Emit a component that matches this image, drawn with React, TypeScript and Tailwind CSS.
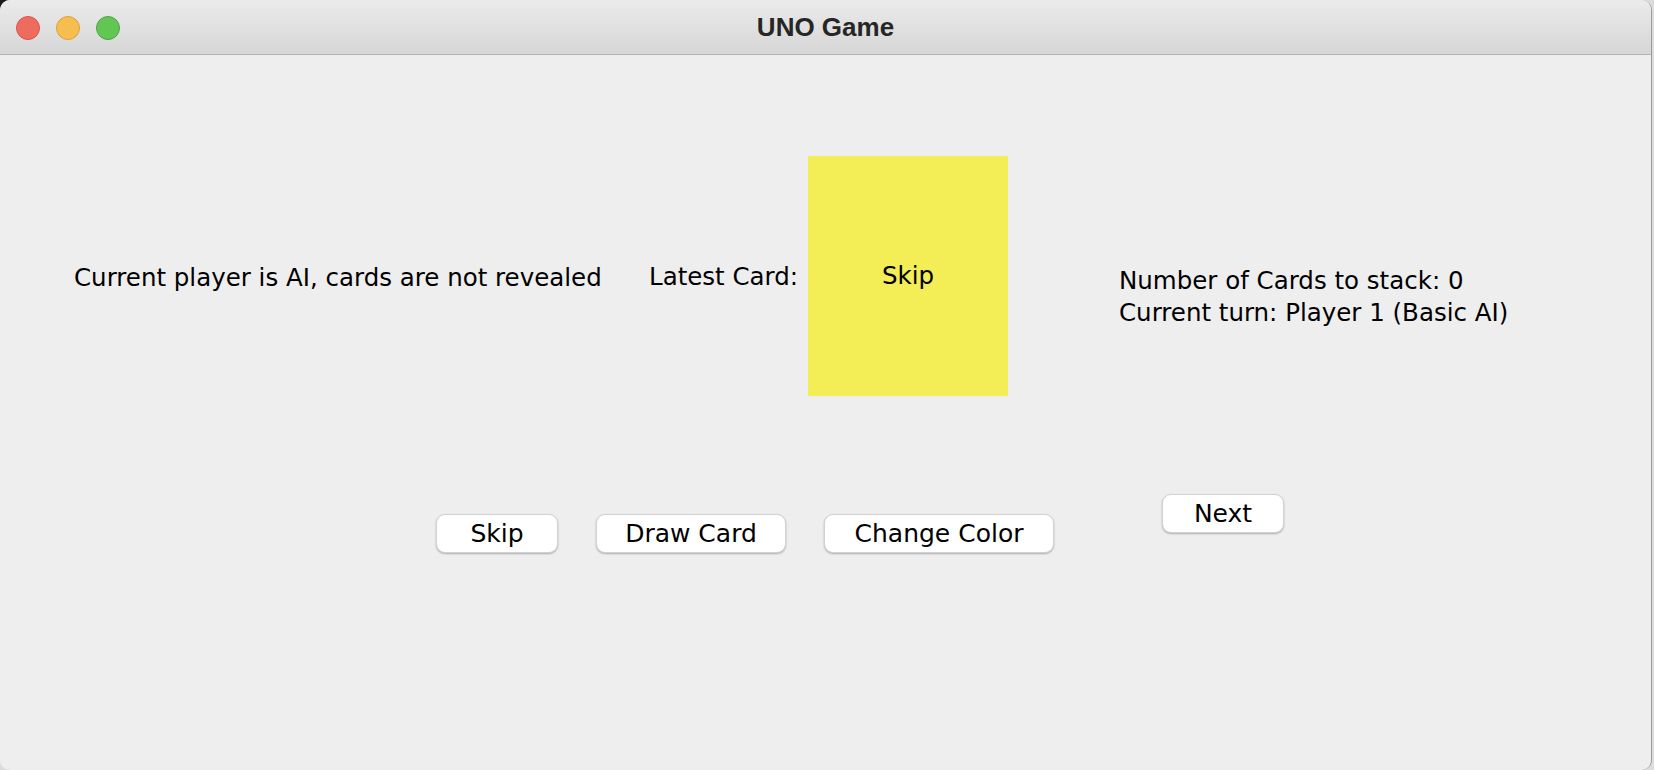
import React from "react";

const body = { fontFamily: '"DejaVu Sans", "Noto Sans", sans-serif' };

function Btn({ label, w, extra = "" }: { label: string; w: string; extra?: string }) {
  return (
    <button
      className={`${w} ${extra} h-[39px] rounded-[9px] bg-white border border-[#d2d2d2] shadow-[0_1px_2px_rgba(0,0,0,0.28)] flex items-center justify-center text-[25px] leading-[30px] text-black`}
      style={body}
    >
      {label}
    </button>
  );
}

export default function App() {
  return (
    <div className="relative w-[1654px] h-[770px] bg-[#dcdcdc] overflow-hidden">
      <div className="absolute left-0 top-0 w-[12px] h-[12px] bg-[#1a1a1a]" />
      <div className="relative w-[1652px] h-[770px] rounded-[10px] bg-[#eeeeee] border-r border-[#9c9c9c] overflow-hidden flex flex-col">
        {/* title bar */}
        <div className="h-[55px] shrink-0 border-b border-[#b3b3b3] bg-gradient-to-b from-[#ebebeb] to-[#d6d6d6] relative flex items-center justify-center">
          <div className="absolute left-[16px] top-[16px] flex gap-[16px]">
            <div className="w-[24px] h-[24px] rounded-full bg-[#ee6b60] border border-[#d5574d]" />
            <div className="w-[24px] h-[24px] rounded-full bg-[#f6be4f] border border-[#d9a23f]" />
            <div className="w-[24px] h-[24px] rounded-full bg-[#62c554] border border-[#4ea443]" />
          </div>
          <span
            className="text-[26px] font-bold text-[#262626] leading-none"
            style={{ fontFamily: '"Liberation Sans", Arial, sans-serif' }}
          >
            UNO Game
          </span>
        </div>

        {/* content */}
        <div className="flex flex-col pt-[101px]" style={body}>
          <div className="flex items-center pl-[74px] text-[24.5px] leading-[30px] text-black">
            <div className="w-[575px] pt-[4px]">Current player is AI, cards are not revealed</div>
            <div className="w-[159px] pt-[2px]">Latest Card:</div>
            <div className="w-[200px] h-[240px] bg-[#f3ee55] flex items-center justify-center">Skip</div>
            <div className="self-start mt-[109px] ml-[111px] leading-[32px]">
              <div>Number of Cards to stack: 0</div>
              <div>Current turn: Player 1 (Basic AI)</div>
            </div>
          </div>

          <div className="flex items-start pl-[436px] gap-[38px] mt-[98px]">
            <Btn label="Skip" w="w-[122px]" extra="mt-[20px]" />
            <Btn label="Draw Card" w="w-[190px]" extra="mt-[20px]" />
            <Btn label="Change Color" w="w-[230px]" extra="mt-[20px]" />
            <Btn label="Next" w="w-[122px]" extra="ml-[70px]" />
          </div>
        </div>
      </div>
    </div>
  );
}
